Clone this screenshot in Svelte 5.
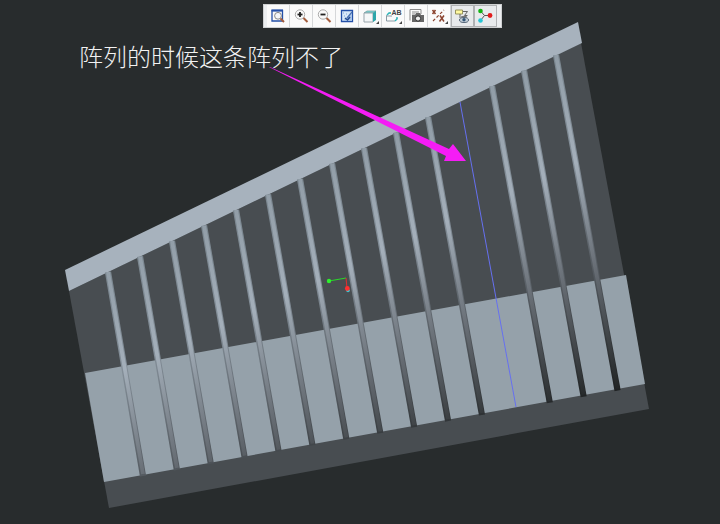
<script>
  const rods = Array.from({ length: 15 }, (_, i) => ({
    x1: 108 + i * 32, y1: 272 - i * 15.5,
    x2: 143 + i * 33.9, y2: 474 - i * 6.1, i
  })).filter((r) => r.i !== 11);
  const tools = ['Refit', 'Zoom in', 'Zoom out', 'Repaint', 'Display style', 'Saved views', 'View manager', 'Datum display', 'Annotation display', 'Spin center'];
</script>

<main>
  <svg class="model" viewBox="0 0 720 524" aria-label="3D model">
    <defs>
      <linearGradient id="edge" gradientUnits="userSpaceOnUse" x1="304" y1="167" x2="442" y2="468">
        <stop offset="0" stop-color="#7b8790" /><stop offset=".33" stop-color="#838e98" />
        <stop offset=".65" stop-color="#545a60" /><stop offset="1" stop-color="#1f2223" />
      </linearGradient>
      <linearGradient id="shine" gradientUnits="userSpaceOnUse" x1="304" y1="167" x2="442" y2="468">
        <stop offset="0" stop-color="#909ca6" /><stop offset=".33" stop-color="#a4afba" />
        <stop offset=".65" stop-color="#666c73" /><stop offset="1" stop-color="#232627" />
      </linearGradient>
    </defs>
    <path fill="#484d51" d="M69 291 581 43 649 409 109 508Z" />
    <path fill="#a7b2bd" d="M65 270 578 22 582 43 69 291Z" />
    <path fill="#95a1aa" d="M85 373 626 275 645 384 104 482Z" />
    {#each rods as r}
      <line x1={r.x1} y1={r.y1} x2={r.x2} y2={r.y2 + 2} stroke="url(#edge)" stroke-width="6.2" />
      <line x1={r.x1} y1={r.y1} x2={r.x2} y2={r.y2} stroke="url(#shine)" stroke-width="3.8" />
    {/each}
    <path d="M460 102 516 407" stroke="#6670f0" fill="none" />
    <path d="M329 281 346 278" stroke="#28d828" fill="none" />
    <path d="M346 278 347 288" stroke="#e03030" fill="none" />
    <circle cx="348" cy="290.5" r="1.8" fill="#42c8d0" />
    <circle cx="329" cy="281" r="2.2" fill="#2ef02e" /><circle cx="347.3" cy="288.5" r="2.4" fill="#ff3030" />
    <path fill="#f51cf5" d="M269 67 270 67 449 149 453 144 466 161 444 161 446 156Z" />
  </svg>
  <p>阵列的时候这条阵列不了</p>
  <div class="bar" role="toolbar" aria-label="View tools">
    {#each tools as t, i}
      <button aria-label={t} class:on={i > 7}>
        <svg viewBox="0 0 18 18" fill="none">
          {#if i === 0}
            <path d="M3 3.500h10.500v10.500H3z" stroke="#2450a8" stroke-width="1.300" /><path d="M2.500 3.500h11.500" stroke="#2450a8" stroke-width="2" /><circle cx="9" cy="8.800" r="3.400" fill="#f3f6f9" stroke="#888" /><path d="m11.500 11.500 3.500 3.500" stroke="#a35c3c" stroke-width="2" />
          {:else if i < 3}
            <circle cx="8" cy="7.500" r="4.700" fill="#fafafa" stroke="#aaa" /><path d="M5.500 7.500h5" stroke="#222" stroke-width="1.800" />
            {#if i === 1}<path d="M8 5v5" stroke="#222" stroke-width="1.800" />{/if}
            <path d="m11.500 11 4 4" stroke="#a35c3c" stroke-width="2" />
          {:else if i === 3}
            <path d="M3.500 3.500h11v11h-11z" fill="#d9e8f8" stroke="#2450a8" stroke-width="1.300" /><path d="M5 14 14 5v9Z" fill="#a9c4e8" /><path d="m9 11 5-6" stroke="#4a70b0" stroke-width="1.200" /><path d="m7 11 2.500 2L12 10" stroke="#234a91" stroke-width="1.600" /><path d="M5 6h1m2 1h1M6 9h1" stroke="#7da0d4" />
          {:else if i === 4}
            <path d="m3 6 3-2h9l-3 2Z" fill="#7fdfe0" stroke="#659090" stroke-width=".7" /><path d="M3 6h9v9H3Z" fill="#f5f7f8" stroke="#99a5ac" stroke-width="1" /><path d="m12 6 3-2v9l-3 2Z" fill="#2ca6aa" />
          {:else if i === 5}
            <path d="M7 6H5L2.500 8.500V14H11l2-2v-1M2.500 9H8" stroke="#8a9aa4" /><path d="m3 8 2-2h2M11 14l2-2v-2" stroke="#2cb6ba" stroke-width="1.400" /><text x="7.500" y="8" font-size="7" font-weight="bold" fill="#444">AB</text>
          {:else if i === 6}
            <path d="M3 13.500V2.500h11V7M5 5h7M5 7h3" stroke="#8b8b8b" /><path d="M5 8h3l1-2h4l1 2h3v7H5Z" fill="#666" /><circle cx="11" cy="11.500" r="2.600" fill="#eee" stroke="#333" />
          {:else if i === 7}
            <path d="m2.500 3 3 4m0-4-3 4M10 8.500l4 6m0-6-4.500 6" stroke="#8b4430" stroke-width="1.500" /><path d="M3 14 14 3" stroke="#8b4430" stroke-width="1.200" stroke-dasharray="3 2" />
          {:else if i === 8}
            <path d="M2.500 3h7v4h-7Z" fill="#fff9a0" stroke="#97945f" /><path d="M10 4.500h4.500l-3 4h3M7 7v4" stroke="#666" /><ellipse cx="11" cy="13" rx="4.500" ry="2.500" fill="#c7d2dc" stroke="#567" /><circle cx="11" cy="12.700" r="1.700" fill="#357" /><path d="M8 10q3-1.500 6 0" stroke="#666" />
          {:else}
            <path d="m4.500 4 4 4.500-4 5M8.500 8.500h5" stroke="#555" /><circle cx="4.500" cy="4" r="2.300" fill="#13b313" /><circle cx="4.500" cy="13.500" r="2.300" fill="#25c5d5" /><circle cx="14" cy="8.500" r="2.400" fill="#e11d1d" />
          {/if}
          {#if i === 4 || i === 5 || i === 7}<path d="M18 14v3h-3Z" fill="#444" />{/if}
        </svg>
      </button>
    {/each}
  </div>
</main>

<style>
  :global(body) { margin: 0; background: #282c2d; }
  main { position: relative; font-family: "Liberation Sans", sans-serif; }
  .model { display: block; width: 100%; }
  p { position: absolute; left: 79px; top: 38px; margin: 0; color: #f2f2f2; font: 300 24px/36px "Noto Sans CJK SC", sans-serif; white-space: nowrap; }
  .bar { position: absolute; left: 263px; top: 4px; display: flex; padding: 0 4px 0 3px; background: #eceef0; border: 1px solid #cfd1d2; }
  button { box-sizing: border-box; width: 23px; height: 22px; padding: 2px; border: 0; border-right: 1px solid #d5d7d9; background: #fafafa; }
  button.on { background: #e8eaec; border: 1px solid #b0b2b4; padding: 1px; }
  button svg { display: block; width: 18px; height: 18px; }
</style>
